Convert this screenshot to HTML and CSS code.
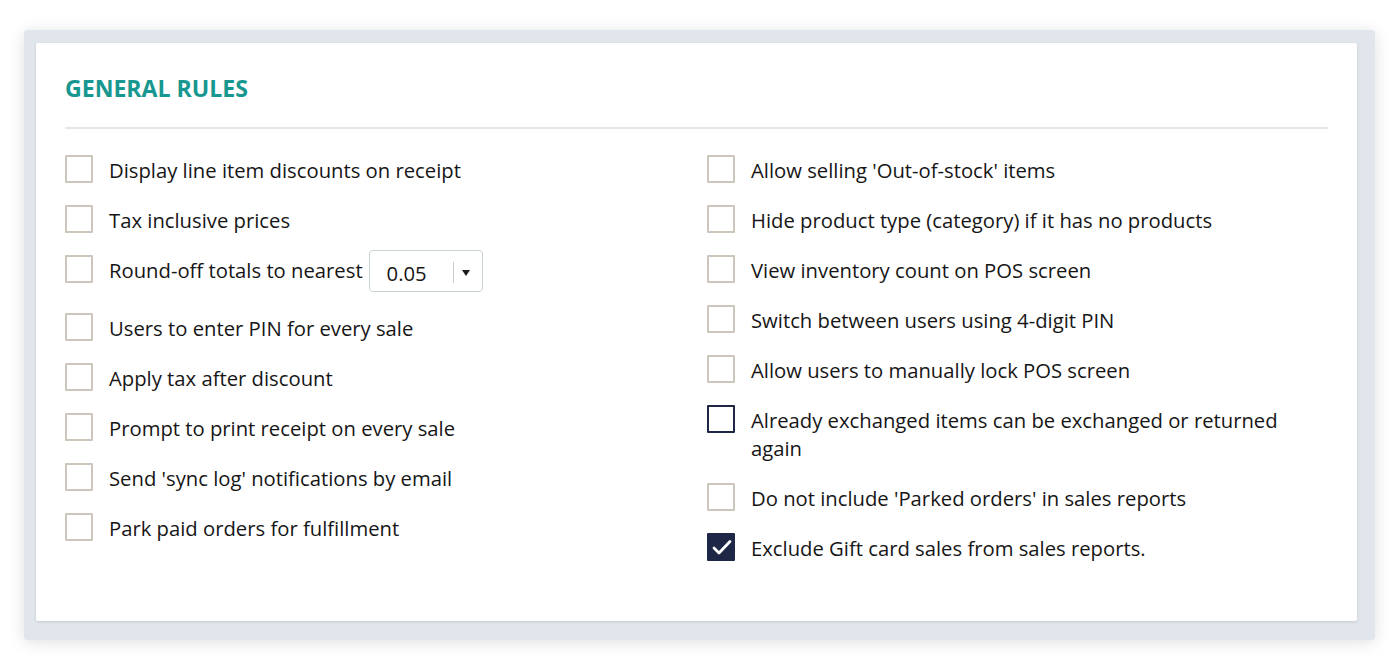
FILE: index.html
```html
<!DOCTYPE html>
<html>
<head>
<meta charset="utf-8">
<link rel="stylesheet" href="styles.css">
</head>
<body>
<div class="page">
  <div class="frame">
    <section class="card">
      <h2 class="title">GENERAL RULES</h2>
      <div class="divider"></div>
      <div class="grid">
        <div class="col">
          <label class="row"><span class="box"></span><span class="text">Display line item discounts on receipt</span></label>
          <label class="row"><span class="box"></span><span class="text">Tax inclusive prices</span></label>
          <label class="row row-select"><span class="box"></span><span class="text">Round-off totals to nearest</span>
            <span class="select"><span class="select-value">0.05</span><span class="select-sep"></span><span class="select-arrow"></span></span>
          </label>
          <label class="row"><span class="box"></span><span class="text">Users to enter PIN for every sale</span></label>
          <label class="row"><span class="box"></span><span class="text">Apply tax after discount</span></label>
          <label class="row"><span class="box"></span><span class="text">Prompt to print receipt on every sale</span></label>
          <label class="row"><span class="box"></span><span class="text">Send 'sync log' notifications by email</span></label>
          <label class="row"><span class="box"></span><span class="text">Park paid orders for fulfillment</span></label>
        </div>
        <div class="col">
          <label class="row"><span class="box"></span><span class="text">Allow selling 'Out-of-stock' items</span></label>
          <label class="row"><span class="box"></span><span class="text">Hide product type (category) if it has no products</span></label>
          <label class="row"><span class="box"></span><span class="text">View inventory count on POS screen</span></label>
          <label class="row"><span class="box"></span><span class="text">Switch between users using 4-digit PIN</span></label>
          <label class="row"><span class="box"></span><span class="text">Allow users to manually lock POS screen</span></label>
          <label class="row"><span class="box box-focus"></span><span class="text">Already exchanged items can be exchanged or returned again</span></label>
          <label class="row"><span class="box"></span><span class="text">Do not include 'Parked orders' in sales reports</span></label>
          <label class="row"><span class="box box-checked"><svg class="check" viewBox="0 0 28 28" width="28" height="28"><path d="M7 15l5 5 11-11.5" fill="none" stroke="#fff" stroke-width="2.8" stroke-linecap="round" stroke-linejoin="round"/></svg></span><span class="text">Exclude Gift card sales from sales reports.</span></label>
        </div>
      </div>
    </section>
  </div>
</div>
</body>
</html>
```

FILE: styles.css
```css
* { box-sizing: border-box; }
html, body { margin: 0; padding: 0; background: #fff; }
body { font-family: "Open Sans", "Noto Sans", sans-serif; color: #161616; }

.page { padding: 30px 25px 30px 24px; }

.frame {
  background: #e1e5ec;
  padding: 13px 18px 19px 12px;
  border-radius: 4px;
  box-shadow: 0 2px 16px rgba(0, 0, 0, 0.13);
}

.card {
  background: #fff;
  border-radius: 2px;
  box-shadow: 0 1px 3px rgba(0, 0, 0, 0.12);
  padding: 30px 29px 60px 29px;
}

.title {
  margin: 0;
  font-size: 23.1px;
  line-height: 30px;
  font-weight: 700;
  color: #17978f;
}

.divider {
  height: 2px;
  background: #e6e6e6;
  margin-top: 24px;
}

.grid {
  display: grid;
  grid-template-columns: 1fr 1fr;
  column-gap: 21px;
  margin-top: 26px;
}

.col {
  display: flex;
  flex-direction: column;
  gap: 22px;
}

.row {
  display: flex;
  align-items: flex-start;
  font-size: 20.25px;
  line-height: 28px;
}

.text { padding-top: 1px; margin-bottom: -1px; }

.box {
  flex: none;
  width: 28px;
  height: 28px;
  border: 2px solid #cdc6bd;
  border-radius: 1px;
  margin-right: 16px;
  background: #fff;
}

.box-focus { border-color: #1e2846; }

.box-checked {
  background: #1e2846;
  border-color: #1e2846;
  position: relative;
}
.check { position: absolute; left: -2px; top: -2px; }

.select {
  display: flex;
  align-items: center;
  flex: none;
  width: 114px;
  height: 42px;
  margin: -5px 0 -1px 6px;
  border: 1px solid #c9d3d3;
  border-radius: 4px;
  padding: 0 12px 0 17px;
}
.select-value { font-size: 20.25px; line-height: 28px; padding-top: 4px; flex: 1; }
.select-sep { width: 1px; height: 21px; background: #c9cccc; margin-right: 8px; margin-top: 2px; }
.select-arrow {
  width: 0; height: 0;
  border-left: 4px solid transparent;
  border-right: 4px solid transparent;
  border-top: 6px solid #1b1b1b;
  margin-top: 3px;
}
```
